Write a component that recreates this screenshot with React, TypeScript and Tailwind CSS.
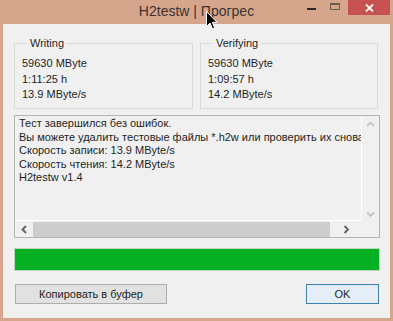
import React from "react";

const Chevron = ({ dir, color }: { dir: "up" | "down" | "left" | "right"; color: string }) => {
  const paths = {
    up: "M1 5 L4.5 1.5 L8 5",
    down: "M1 1.5 L4.5 5 L8 1.5",
    left: "M5 1 L1.5 4.5 L5 8",
    right: "M1.5 1 L5 4.5 L1.5 8",
  };
  const vertical = dir === "up" || dir === "down";
  return (
    <svg width={vertical ? 9 : 7} height={vertical ? 7 : 9} viewBox={vertical ? "0 0 9 7" : "0 0 7 9"}>
      <path d={paths[dir]} fill="none" stroke={color} strokeWidth="1.8" />
    </svg>
  );
};

const GroupBox = ({ title, lines }: { title: string; lines: string[] }) => (
  <fieldset className="border border-[#d9d9d9] px-[7px] h-[72px]">
    <legend className="ml-[5px] px-[3px] text-[11px] leading-[13px] text-[#1e1e1e]">{title}</legend>
    <div className="pt-[6px]">
      {lines.map((line, i) => (
        <div key={i} className="text-[11px] leading-[15.5px] text-[#1e1e1e]">
          {line}
        </div>
      ))}
    </div>
  </fieldset>
);

const App: React.FC = () => {
  const log = [
    "Тест завершился без ошибок.",
    "Вы можете удалить тестовые файлы *.h2w или проверить их снова.",
    "Скорость записи: 13.9 MByte/s",
    "Скорость чтения: 14.2 MByte/s",
    "H2testw v1.4",
  ];

  return (
    <div
      className="relative w-[393px] h-[321px] bg-[#d6a68c] overflow-hidden"
      style={{ fontFamily: '"Liberation Sans", Arial, sans-serif' }}
    >
      {/* Title bar */}
      <div className="relative h-[24px] flex items-center justify-center">
        <span className="text-[14px] leading-none text-[#3b3330] -mt-[3px]">H2testw | Прогрес</span>
        <div className="absolute right-[3px] top-0 flex items-start">
          <div className="w-[22px] h-[15px] flex items-center justify-center">
            <div className="w-[9px] h-[2px] bg-[#2e2724] mt-[2px]" />
          </div>
          <div className="w-[26px] h-[15px] flex items-center justify-center">
            <div className="w-[10px] h-[7px] border border-[#6b5a52] border-t-2 -mt-[2px]" />
          </div>
          <div className="w-[42px] h-[15px] bg-[#c75050] flex items-center justify-center">
            <svg width="9" height="8" viewBox="0 0 9 8">
              <path d="M1 0.5 L8 7.5 M8 0.5 L1 7.5" stroke="#fff" strokeWidth="1.8" />
            </svg>
          </div>
        </div>
      </div>

      {/* Client area */}
      <div className="mx-[3px] h-[294px] bg-[#f0f0f0] pl-[11px] pr-[10px] pt-[13px]">
        <div className="flex gap-[7px] pr-[2px]">
          <div className="w-[179px]">
            <GroupBox title="Writing" lines={["59630 MByte", "1:11:25 h", "13.9 MByte/s"]} />
          </div>
          <div className="w-[178px]">
            <GroupBox title="Verifying" lines={["59630 MByte", "1:09:57 h", "14.2 MByte/s"]} />
          </div>
        </div>

        {/* Log box */}
        <div className="mt-[6px] h-[123px] border border-[#b4b4b4] flex flex-col">
          <div className="flex flex-1 min-h-0">
            <div className="flex-1 overflow-hidden pl-[4px] pt-[1px] border-r border-b border-white">
              {log.map((line, i) => (
                <div key={i} className="text-[11px] leading-[13.6px] text-[#1e1e1e] whitespace-nowrap">
                  {line}
                </div>
              ))}
            </div>
            <div className="w-[17px] flex flex-col items-center justify-between pt-[5px] pb-[3px]">
              <Chevron dir="up" color="#c4c4c4" />
              <Chevron dir="down" color="#c4c4c4" />
            </div>
          </div>
          <div className="h-[16px] flex items-center">
            <div className="w-[18px] flex justify-center">
              <Chevron dir="left" color="#606060" />
            </div>
            <div className="w-[297px] h-[15px] bg-[#cdcdcd]" />
            <div className="w-[32px] flex justify-center">
              <Chevron dir="right" color="#606060" />
            </div>
          </div>
        </div>

        {/* Progress bar */}
        <div className="mt-[10px] h-[23px] border border-[#bcd7bc] bg-[#06b025]" />

        {/* Buttons */}
        <div className="mt-[13px] flex justify-between pr-[1px]">
          <button className="ml-[1px] w-[152px] h-[20px] border border-[#adadad] bg-[#e1e1e1] text-[11px] text-[#1e1e1e]">
            Копировать в буфер
          </button>
          <button className="w-[73px] h-[20px] border border-[#3c7fb1] bg-[#e5eef6] text-[11px] text-[#1e1e1e]">
            OK
          </button>
        </div>
      </div>

      {/* Mouse cursor */}
      <svg className="absolute left-[206px] top-[11px]" width="12" height="19" viewBox="0 0 12 19">
        <path
          d="M0.5 0.5 L0.5 15.5 L4 12 L6.5 17.8 L8.7 16.9 L6.3 11.3 L11 11.3 Z"
          fill="#000"
          stroke="#fff"
          strokeWidth="1"
        />
      </svg>
    </div>
  );
};

export default App;
